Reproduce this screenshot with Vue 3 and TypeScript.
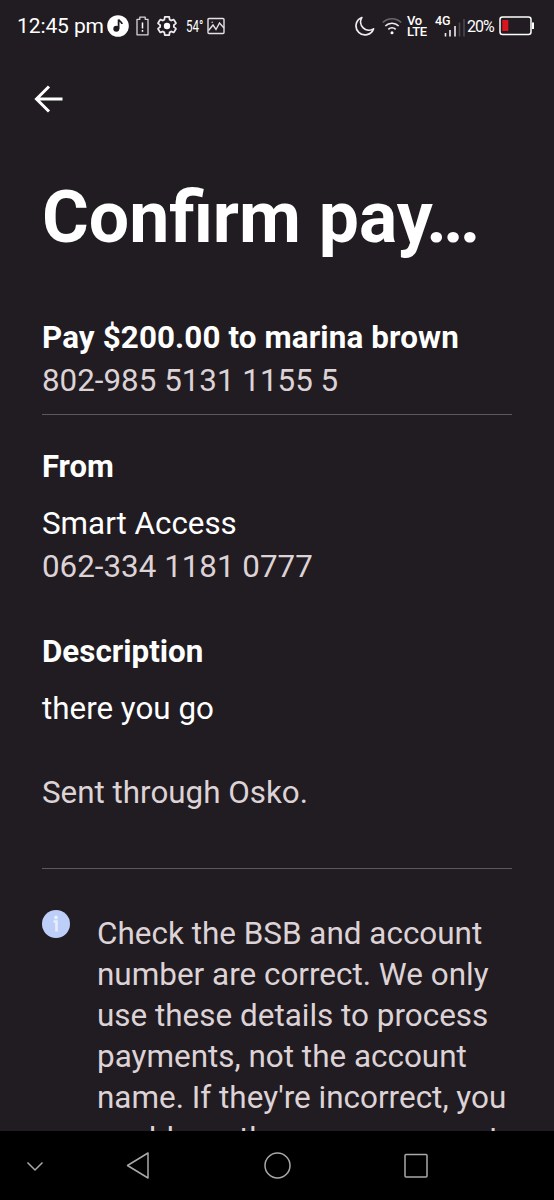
<script setup lang="ts">
const notice: string[] = [
  'Check the BSB and account',
  'number are correct. We only',
  'use these details to process',
  'payments, not the account',
  "name. If they're incorrect, you",
  'could pay the wrong account',
]
</script>

<template>
  <div class="phone">
    <header class="status">
      <div class="group left">
        <span class="time">12:45 pm</span>
        <svg class="music" width="22" height="22" viewBox="0 0 22 22">
          <circle cx="11" cy="11" r="10.8" fill="#fff" />
          <circle cx="9.3" cy="13.7" r="3" fill="#1d191d" />
          <path d="M11.6 13.7V4.600c.5 1.800 3.200 2 3.400 4.400" fill="none" stroke="#1d191d" stroke-width="1.800" />
        </svg>
        <svg class="alert" width="13" height="20" viewBox="0 0 13 20">
          <path d="M1 3.300h2.800V1.200h5.400v2.100H12v15.500H1z" fill="none" stroke="#d8d5d8" stroke-width="1.300" stroke-linejoin="round" />
          <path d="M6.500 6.500v6M6.500 14v1.800" stroke="#fff" stroke-width="1.500" />
        </svg>
        <svg class="gear" width="20" height="20" viewBox="2 2 20 20">
          <path d="M19.430 12.980c.04-.32.07-.64.07-.98s-.03-.66-.07-.98l2.110-1.650c.19-.15.24-.42.12-.64l-2-3.460c-.12-.22-.39-.3-.61-.22l-2.490 1c-.52-.4-1.080-.73-1.690-.98l-.38-2.650C14.460 2.180 14.250 2 14 2h-4c-.25 0-.46.18-.49.42l-.38 2.650c-.61.25-1.170.59-1.690.98l-2.490-1c-.23-.09-.49 0-.61.22l-2 3.460c-.13.22-.07.49.12.64l2.110 1.650c-.04.32-.07.65-.07.98s.03.66.07.98l-2.110 1.650c-.19.15-.24.42-.12.64l2 3.460c.12.22.39.3.61.22l2.490-1c.52.4 1.080.73 1.690.98l.38 2.650c.03.24.24.42.49.42h4c.25 0 .46-.18.49-.42l.38-2.650c.61-.25 1.170-.59 1.690-.98l2.490 1c.23.09.49 0 .61-.22l2-3.460c.12-.22.07-.49-.12-.64z" fill="none" stroke="#efedef" stroke-width="1.900" transform="translate(1 1) scale(.917)" />
          <circle cx="12" cy="12" r="3.200" fill="#fff" />
        </svg>
        <span class="temp"><span class="narrow">54°</span></span>
        <svg class="photo" width="18" height="18" viewBox="0 0 18 18" fill="none" stroke="#e4e1e4" stroke-width="1.400">
          <rect x="1" y="1.500" width="16" height="15" rx="1" />
          <path d="M1.500 13.500 6 8l3 4.500 3.500-6.500 4.500 5" />
          <circle cx="5.200" cy="5.200" r=".8" fill="#d8d5d8" stroke="none" />
        </svg>
      </div>
      <div class="group right">
        <svg class="moon" width="21" height="20" viewBox="0 0 21 20">
          <path d="M7.800 1.500a9 9 0 1 0 11.700 11.400A8.400 8.400 0 0 1 7.800 1.500z" fill="none" stroke="#efedef" stroke-width="1.700" stroke-linejoin="round" />
        </svg>
        <svg class="wifi" width="20" height="18" viewBox="0 0 20 18" fill="none" stroke-width="1.600">
          <path d="M.8 5.500a13 13 0 0 1 18.400 0" stroke="#6a666a" />
          <path d="M3.300 9a9.500 9.500 0 0 1 13.400 0M6.300 12.300a5.600 5.600 0 0 1 7.400 0" stroke="#efedef" />
          <circle cx="10" cy="15.800" r="1.500" fill="#fff" />
        </svg>
        <span class="volte"><span>Vo</span><span>LTE</span></span>
        <span class="cell">
          <span class="net">4G</span>
          <svg class="bars" width="21" height="18" viewBox="0 0 21 18">
            <path d="M1.500 14v3.500M6 11v6.500M11 7v10.500" stroke="#efedef" stroke-width="1.600" />
            <path d="M15.500 3.500v14M20 0v17.500" stroke="#4c484c" stroke-width="1.600" />
          </svg>
        </span>
        <span class="percent">20%</span>
        <svg class="battery" width="36" height="20" viewBox="0 0 36 20">
          <rect x="1" y="1" width="31" height="17.500" rx="2.500" fill="none" stroke="#fff" stroke-width="1.500" />
          <path d="M34 6.500v6.500" stroke="#fff" stroke-width="2" />
          <rect x="3.300" y="4" width="6" height="11" fill="#d9161d" />
        </svg>
      </div>
    </header>

    <button class="back" aria-label="Back">
      <svg width="30" height="28" viewBox="0 0 30 28" fill="none" stroke="#fff" stroke-width="3">
        <path d="M28.500 14H3M15 1.500 2.500 14 15 26.500" />
      </svg>
    </button>

    <main>
      <h1>Confirm pay<span class="dots">...</span></h1>
      <section class="payee">
        <p class="strong wide">Pay $200.00 to marina brown</p>
        <p class="soft">802-985 5131 1155 5</p>
      </section>
      <section class="from">
        <p class="strong label">From</p>
        <p class="gap">Smart Access</p>
        <p class="soft">062-334 1181 0777</p>
      </section>
      <section class="desc">
        <p class="strong">Description</p>
        <p class="gap">there you go</p>
        <p class="soft sent">Sent through Osko.</p>
      </section>
      <section class="notice">
        <svg width="28" height="28" viewBox="0 0 28 28">
          <circle cx="14" cy="14" r="14" fill="#bdcef8" />
          <circle cx="14" cy="7.500" r="1.900" fill="#e6eeff" />
          <path d="M11.500 11.500H14.500V21.500" stroke="#e6eeff" stroke-width="2.600" fill="none" />
        </svg>
        <div class="lines soft">
          <p v-for="line in notice" :key="line">{{ line }}</p>
        </div>
      </section>
    </main>

    <nav>
      <svg width="554" height="69" viewBox="0 0 554 69" fill="none" stroke="#a9a9a9" stroke-width="1.500" stroke-linejoin="round">
        <path d="M27.500 31.500 35 39l7.500-7.500" />
        <path d="M127.500 34.500 148 22v25z" />
        <circle cx="277.500" cy="34.500" r="12.500" />
        <rect x="405" y="23.500" width="22" height="22.500" rx="1" />
      </svg>
    </nav>
  </div>
</template>

<style>
body {
  margin: 0;
  background: #211c21;
}
</style>

<style scoped>
.phone {
  box-sizing: border-box;
  width: 554px;
  height: 1200px;
  overflow: hidden;
  display: flex;
  flex-direction: column;
  background: #211c21;
  color: #fff;
  font-family: Roboto, 'Liberation Sans', sans-serif;
}
p, h1 { margin: 0; white-space: nowrap; }
.status {
  height: 52px;
  flex: none;
  display: flex;
  justify-content: space-between;
  padding: 0 19px 0 17px;
}
.group { display: flex; align-items: center; }
.time { font-size: 21px; width: 90px; white-space: nowrap; letter-spacing: -.1px; }
.alert { margin-left: 7px; }
.gear { margin-left: 8px; }
.temp { font-size: 16.500px; margin-left: 9px; width: 19px; white-space: nowrap; }
.narrow { display: inline-block; transform: scaleX(.7); transform-origin: 0 50%; }
.photo { margin-left: 2px; }
.wifi { margin-left: 7px; }
.volte { display: flex; flex-direction: column; margin-left: 5px; width: 22px; font-size: 13px; line-height: 11px; font-weight: 500; letter-spacing: -.3px; }
.cell { display: flex; margin-left: 6px; width: 30px; height: 22px; }
.net { font-size: 12.500px; line-height: 11px; font-weight: 500; width: 9px; }
.bars { align-self: flex-end; }
.percent { font-size: 16px; margin-left: 2px; width: 32px; letter-spacing: -1px; }
.back {
  align-self: flex-start;
  display: flex;
  flex: none;
  border: 0;
  padding: 0;
  margin: 33px 0 0 34px;
  background: none;
}
main { flex: 1; min-height: 0; overflow: hidden; padding: 0 42px; font-size: 31.350px; line-height: 43px; }
h1 { font-size: 71.500px; line-height: 84px; font-weight: 700; margin-top: 63px; }
.dots { letter-spacing: -4px; margin-left: -6.500px; }
.strong { font-weight: 700; }
.wide { letter-spacing: .13px; }
.label { font-size: 31px; }
.soft { color: #ddd3d6; }
.payee { margin-top: 56px; padding-bottom: 12px; border-bottom: 1px solid #5d585b; }
.from { margin-top: 30px; }
.gap { margin-top: 14px; }
.desc { margin-top: 42px; padding-bottom: 54px; border-bottom: 1px solid #5d585b; }
.sent { margin-top: 41px; }
.notice { display: flex; gap: 27px; margin-top: 44px; line-height: 41px; font-size: 31.450px; }
.notice svg { flex: none; margin-top: -3px; margin-left: -.5px; margin-right: .5px; }
nav { flex: none; height: 69px; background: #000; }
nav svg { display: block; }
</style>
